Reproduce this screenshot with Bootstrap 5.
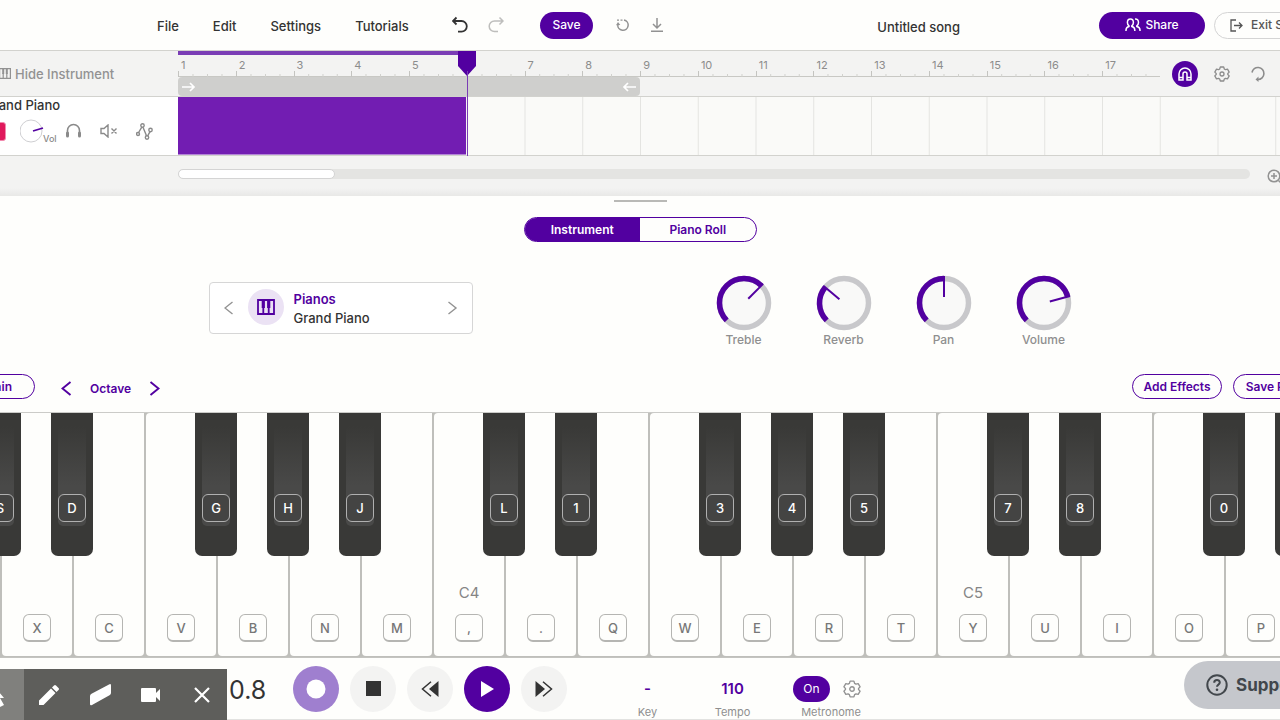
<!DOCTYPE html>
<html lang="en">
<head>
<meta charset="utf-8">
<meta name="viewport" content="width=device-width, initial-scale=1">
<title>Untitled song</title>
<link rel="stylesheet" href="https://cdn.jsdelivr.net/npm/bootstrap@5.3.0/dist/css/bootstrap.min.css">
<style>
:root{--violet:#5200a0;--ink:#333;--soft:#929292;--line:#d2d2ce;--side:178px;--tools:120px;--bar:calc((100% - var(--tools)) / 17)}
body{font-family:Inter,"Liberation Sans",sans-serif;font-size:13px;line-height:18px;color:var(--ink);background:#fefefc;font-weight:500;min-height:100vh;overflow:hidden}
button{font:inherit;color:inherit;background:none;border:0;padding:0}
a{color:inherit;text-decoration:none}
svg{display:block;flex:none;fill:none;stroke:currentColor}
.violet{color:var(--violet)}
.soft{color:var(--soft)}
.topbar{height:51px;border-bottom:1px solid var(--line)}
.menu{width:295px;margin-left:157px;gap:34px;padding-top:2px}
.tools{gap:20px}
.pill{height:27px;border-radius:14px;font-size:12px}
.pill-fill{background:var(--violet);color:#fff}
.save{width:53px;margin:0 3px 0 16px}
.share{width:106px}
.song-title{margin-right:139px;padding-top:3px}
.exit{width:112px;border:1px solid #d4d4d4;padding-left:15px;color:#555}
.bleed{margin-right:-46px;gap:9px}
.arranger{background:#f3f3f2}
.side{width:var(--side);overflow:hidden}
.ruler-row{height:46px;border-bottom:1px solid var(--line)}
.ruler{margin-right:var(--tools);height:26px;border-bottom:1px solid #c8c8c4}
.measure{flex:1 1 0;height:26px;padding:5px 0 0 3px;font-size:11px;font-weight:400;color:#8c8c8c;position:relative;
background:linear-gradient(90deg,#c4c4c0 1px,transparent 1px) 0 100%/100% 6px no-repeat,linear-gradient(90deg,#d0d0cc 1px,transparent 1px) 0 100%/25% 3px repeat-x}
.played{top:0;left:0;height:4px;width:calc(var(--bar) * 5);background:#7a3db5}
.loop{height:19px;width:calc(var(--bar) * 8);background:#cfcfcd;border-radius:4px;color:#fff;padding:0 3px}
.playhead{top:0;left:calc(var(--bar) * 5 - 9px);width:20px;color:var(--violet);z-index:2}
.ruler-tools{right:0;top:10px;width:108px;gap:12px;color:#8c8c8c}
.magnet{width:26px;height:26px;border-radius:50%;background:var(--violet);color:#fff}
.lane-row{height:59px;border-bottom:1px solid var(--line);background:#fff}
.lane{background:linear-gradient(90deg,#e4e4e1 1px,transparent 1px) 0 0/var(--bar) 100% #fafaf8}
.clip{width:calc(var(--bar) * 5 - 1px);background:#721db2;border-bottom:1px solid #b384d6}
.track-name{margin:-1px 0 0 -16px}
.track-tools{margin:3px 0 0 -14px;height:28px;color:#8a8a8a}
.rec{width:20px;height:19px;border-radius:3px;background:#e0195c;border:1px solid #f28aae;margin-right:14px}
.vol{font-size:9px;line-height:10px;margin:16px 0 0 -1px}
.mute{margin:0 18px}
.scroll-row{height:40px;padding:13px 0 0 178px;background:linear-gradient(#f3f3f2 80%,#e8e8e6)}
.scroll-track{height:10px;border-radius:5px;background:#e4e4e2;flex:0 0 calc(100% - 30px)}
.scroll-thumb{height:10px;width:157px;border-radius:5px;background:#fff;border:1px solid #d4d4d4}
.zoom-btn{margin-left:17px}
.grip{width:53px;height:2px;margin:4px auto 15px;background:#b9b9b6}
.tabs-pill{width:233px;height:25px;border:1px solid var(--violet);border-radius:13px;overflow:hidden}
.tabs-pill button{font-size:12px;font-weight:600;color:var(--violet)}
.tabs-pill .on{background:var(--violet);color:#fff}
.devices{margin-top:33px;gap:243px}
.picker{width:264px;height:52px;border:1px solid #d6d6d6;border-radius:4px;padding:0 14px;margin-top:7px;background:#fff}
.family{width:36px;height:36px;border-radius:50%;background:#ebe2f4;margin:-2px 6px 0 14px}
.picker-text{line-height:19px;padding-top:2px}
.knobs{gap:44px}
.knob{width:56px;color:#8f8f8f;font-size:12px}
.knob svg{overflow:visible}
.controls{margin-top:25px;padding-bottom:13px}
.outline{height:25px;border:1px solid var(--violet);border-radius:13px;font-size:12px;color:var(--violet);font-weight:600}
.sustain{width:70px;margin-left:-35px;padding-right:22px}
.octave{margin-left:26px;gap:18px;font-size:12px;font-weight:600}
.fx{width:90px}
.preset{width:94px;margin-right:-47px;margin-left:11px}
.keyboard{margin-left:-70px;height:246px;background:#bfbfbb;border-top:1px solid #cbcbc8;border-bottom:1px solid #c4c4c0}
.slot{flex:0 0 72px;position:relative}
.ivory{width:70px;height:243px;background:#fefefc;border-radius:0 0 4px 4px;color:#777;padding-bottom:14px}
.slot.c .ivory,.slot.f .ivory{border-radius:4px}
.ebony{top:0;left:49px;width:42px;height:143px;background:#393937;border-radius:0 0 7px 7px;color:#fff;z-index:1}
.dip{width:28px;height:100px;margin:13px auto 0;padding-top:68px;border-radius:0 0 5px 5px;background:linear-gradient(#393937,#494948 60%,#494948)}
.cap{width:28px;height:28px;line-height:27px;border:1px solid #b5b5b2;border-radius:6px}
.ivory .cap{border-bottom-width:2px}
.ebony .cap{border-color:#b0b0b0;background:#444443}
.note{font-size:15px;font-weight:400;margin-bottom:12px;color:#858585}
.transport{height:62px;padding-left:229px;border-bottom:1px solid #e2e2e0}
.clock{width:64px;font-size:25px;font-weight:400;line-height:30px;padding-top:2px}
.round{width:46px;height:46px;border-radius:50%;background:#f3f3f2}
.round.rec-on{background:#9f7fcf;color:#fff}
.round.go{background:var(--violet);color:#fff}
.stats{margin-left:38px}
.stat{width:85px;font-size:11px;line-height:14px;font-weight:400;color:#8f8f8f}
.stat b,.metro-row{height:26px;line-height:26px;margin-bottom:3px}
.stat b{font-size:15px;font-weight:600;color:var(--violet)}
.metro{width:76px;margin-left:18px}
.on-pill{width:37px;height:26px;border-radius:13px;font-size:12px}
.capture{left:0;bottom:0;width:227px;height:51px;background:#5e5e5b;color:#fff;z-index:3;overflow:hidden}
.capture button{flex:1 1 0;height:51px}
.capture .first{flex:0 0 24px;background:#80807d}
.support{right:-32px;bottom:11px;width:128px;height:48px;border-radius:24px;background:#c5c7cc;color:#42474c;padding-left:22px;font-size:17px;font-weight:700;gap:8px;z-index:3}
</style>
</head>
<body class="d-flex flex-column">

<header class="topbar d-flex align-items-center">
  <nav class="menu d-flex flex-shrink-0">
    <a href="#">File</a><a href="#">Edit</a><a href="#">Settings</a><a href="#">Tutorials</a>
  </nav>
  <div class="tools d-flex align-items-center flex-shrink-0 me-auto">
    <button aria-label="Undo"><svg width="16" height="18" viewBox="0 0 16 18" stroke-width="1.800"><path d="M4.500 1.500 1 5l3.500 3.500M1 5h8.500a5.300 5.300 0 0 1 0 10.600H6"/></svg></button>
    <button aria-label="Redo" class="text-black-50 opacity-50"><svg width="16" height="18" viewBox="0 0 16 18" stroke-width="1.500"><path d="M11.500 1.500 15 5l-3.500 3.500M15 5H6.500a5.300 5.300 0 0 0 0 10.600H10"/></svg></button>
    <button class="pill pill-fill save">Save</button>
    <button aria-label="Revert" class="soft"><svg width="14" height="16" viewBox="0 0 14 16" stroke-width="1.500"><path d="M8 3a5.200 5.200 0 1 1-6.200 4.500"/><path d="M1 3.200h2M4.500 3.200h2" stroke-width="1.200"/><path d="M0 8.200 2 5l2.300 3z" fill="currentColor" stroke="none"/></svg></button>
    <button aria-label="Download" class="soft"><svg width="14" height="16" viewBox="0 0 14 16" stroke-width="1.500"><path d="M7 1v10M3 7l4 4 4-4M1 14.300h12"/></svg></button>
  </div>
  <div class="song-title">Untitled song</div>
  <div class="bleed d-flex flex-shrink-0">
    <button class="pill pill-fill share d-flex align-items-center justify-content-center gap-1"><svg width="16" height="14" viewBox="0 0 16 14" stroke-width="1.500"><path d="M1 13v-1c0-2 1-3 3-3.500V7.800C2.800 7 2.400 6 2.400 4.600 2.400 2.400 3.600 1 5.400 1s3 1.400 3 3.600c0 1.400-.5 2.400-1.600 3.200v.7c2 .5 3 1.500 3 3.500v1M10 1c2.300-.2 3.500 1.300 3.500 3.600 0 1.400-.5 2.400-1.700 3.200v.7c2 .5 3.200 1.500 3.200 3.500v1"/></svg>Share</button>
    <button class="pill exit d-flex align-items-center gap-2 text-nowrap"><svg width="13" height="13" viewBox="0 0 13 13" stroke-width="1.300"><path d="M6 1H1v11h5M4 6.500h8M9 3.500l3 3-3 3"/></svg>Exit Studio</button>
  </div>
</header>

<section class="arranger">
  <div class="ruler-row d-flex">
    <div class="side soft d-flex align-items-center">
      <button class="d-flex align-items-center text-nowrap"><svg class="me-1" width="11" height="11" viewBox="1 0 11 11" stroke-width="1.200"><path d="M.6.6h10.800v9.800H.6zM4.200 5v5.400M7.800 5v5.400"/><path d="M4.200.6V6M7.800.6V6" stroke-width="2"/></svg>Hide Instrument</button>
    </div>
    <div class="flex-grow-1 position-relative">
      <div class="ruler d-flex" id="ruler"></div>
      <div class="loop d-flex align-items-center justify-content-between">
        <svg width="16" height="12" viewBox="0 0 16 12" stroke-width="1.700"><path d="M1 6h12M9 2l4 4-4 4"/></svg>
        <svg width="16" height="12" viewBox="0 0 16 12" stroke-width="1.700"><path d="M15 6H3M7 2 3 6l4 4"/></svg>
      </div>
      <div class="played position-absolute"></div>
      <div class="playhead position-absolute"><svg width="20" height="105" viewBox="0 0 20 105"><path d="M0 0h18v15l-9 10-9-10z" fill="currentColor" stroke="none"/><path d="M9.500 20v85" stroke="#7a3db5"/></svg></div>
      <div class="ruler-tools position-absolute d-flex align-items-center">
        <button class="magnet d-grid align-items-center justify-content-center" aria-label="Snap"><svg width="14" height="14" viewBox="0 0 14 14" stroke-width="1.500"><path d="M1 13V7a6 6 0 0 1 12 0v6H9V7a2 2 0 0 0-4 0v6zM1 10.500h4M9 10.500h4"/></svg></button>
        <button aria-label="Settings" class="ms-1 me-2"><svg width="16" height="16" viewBox="0 0 16 16" stroke-width="1.300"><path d="M6.300 1h3.400l.6 2 1.200.7 2-.5 1.700 2.900L13.800 7.500v1l1.400 1.400-1.700 2.900-2-.5-1.200.7-.6 2H6.300l-.6-2-1.200-.7-2 .5L.8 9.900l1.400-1.400v-1L.8 6.100l1.700-2.900 2 .5L5.700 3z" stroke-linejoin="round"/><circle cx="8" cy="8" r="2"/></svg></button>
        <button aria-label="Loop"><svg width="16" height="16" viewBox="0 0 16 16" stroke-width="1.600"><path d="M2 6.500A6 6 0 1 1 8 13.500"/><path d="m8.500 10.500-3 3 3 2.500z" fill="currentColor" stroke="none"/></svg></button>
      </div>
    </div>
  </div>

  <div class="lane-row d-flex">
    <div class="side">
      <div class="track-name text-nowrap">Grand Piano</div>
      <div class="track-tools d-flex align-items-center">
        <button class="rec flex-shrink-0" aria-label="Arm"></button>
        <svg width="24" height="24" viewBox="-1 0 24 24"><circle cx="10" cy="12" r="11" stroke="#cfcfd2"/><path d="m12 12 10-3" stroke="#5200a0" stroke-width="1.800"/></svg>
        <span class="vol">Vol</span>
        <button aria-label="Solo" class="ms-2"><svg width="17" height="16" viewBox="0 0 17 16" stroke-width="1.600"><path d="M2.500 11V7.500a6 6 0 0 1 12 0V11"/><path d="M2.500 10v3M14.500 10v3" stroke-width="3" stroke-linecap="round"/></svg></button>
        <button aria-label="Mute" class="mute"><svg width="18" height="14" viewBox="0 0 18 14" stroke-width="1.400"><path d="M1 4.500h3L8 1v12L4 9.500H1zM11.500 4.500l5 5M16.500 4.500l-5 5"/></svg></button>
        <button aria-label="Automation"><svg width="17" height="17" viewBox="0 0 17 17" stroke-width="1.400"><circle cx="2" cy="11" r="1.500"/><circle cx="6.500" cy="2.500" r="1.700"/><circle cx="11" cy="14.500" r="1.700"/><circle cx="14.500" cy="7" r="1.700"/><path d="M2.600 9.500 5.800 4.200M7 4.200l3.500 8.600M11.700 12.800 14 8.700"/></svg></button>
      </div>
    </div>
    <div class="lane flex-grow-1 d-flex"><div class="clip"></div></div>
  </div>

  <div class="scroll-row d-flex">
    <div class="scroll-track"><div class="scroll-thumb"></div></div>
    <button class="zoom-btn soft align-self-start" aria-label="Zoom in"><svg width="17" height="17" viewBox="0 0 17 17" stroke-width="1.500"><circle cx="7" cy="7" r="5.800"/><path d="M4 7h6M7 4v6M11.500 11.500l5 5"/></svg></button>
  </div>
</section>

<main>
  <div class="grip"></div>
  <div class="tabs-pill d-flex mx-auto">
    <button class="on w-50">Instrument</button><button class="w-50">Piano Roll</button>
  </div>

  <div class="devices d-flex justify-content-center">
    <div class="picker d-flex align-items-center flex-shrink-0">
      <button class="soft" aria-label="Previous instrument"><svg width="10" height="14" viewBox="1 0 10 14" stroke-width="1.400"><path d="M9.500 1 2 7l7.500 6"/></svg></button>
      <div class="family violet d-flex align-items-center justify-content-center"><svg width="18" height="16" viewBox="0 0 18 16" stroke-width="1.800"><path d="M1 1h16v14H1zM6.300 8v7M11.700 8v7"/><path d="M6.300 1v8M11.700 1v8" stroke-width="3.200"/></svg></div>
      <div class="picker-text flex-grow-1 ps-1">
        <div class="violet fw-semibold">Pianos</div>
        <div>Grand Piano</div>
      </div>
      <button class="soft" aria-label="Next instrument"><svg width="11" height="14" viewBox="0 0 11 14" stroke-width="1.400"><path d="m1.500 1 7.500 6-7.500 6"/></svg></button>
    </div>
    <div class="knobs d-flex" id="knobs"></div>
  </div>

  <div class="controls d-flex align-items-center">
    <button class="outline sustain text-end flex-shrink-0">Sustain</button>
    <div class="octave violet d-flex align-items-center pt-1">
      <button aria-label="Octave down"><svg width="11" height="15" viewBox="0 0 11 15" stroke-width="1.900"><path d="M9.500 1 1.500 7.500l8 6.500"/></svg></button>
      Octave
      <button aria-label="Octave up"><svg width="11" height="15" viewBox="0 0 11 15" stroke-width="1.900"><path d="m1.500 1 8 6.500-8 6.500"/></svg></button>
    </div>
    <button class="outline fx ms-auto flex-shrink-0">Add Effects</button>
    <button class="outline preset flex-shrink-0">Save Preset</button>
  </div>

  <div class="keyboard d-flex" id="keyboard"></div>
</main>

<footer class="transport d-flex align-items-center">
  <div class="clock">0.8</div>
  <div class="d-flex" style="gap:11px">
    <button class="round rec-on d-flex align-items-center justify-content-center" aria-label="Record"><svg width="20" height="20"><circle cx="10" cy="10" r="9.500" fill="currentColor" stroke="none"/></svg></button>
    <button class="round d-flex align-items-center justify-content-center" aria-label="Stop"><svg width="15" height="15"><path d="M0 0h15v15H0z" fill="currentColor" stroke="none"/></svg></button>
    <button class="round d-flex align-items-center justify-content-center" aria-label="Rewind"><svg width="18" height="16" viewBox="0 0 18 16" stroke-width="1.500"><path d="M17.500 0v16L8 8z" fill="currentColor" stroke="none"/><path d="M10 .8 1.500 8l8.500 7.200"/></svg></button>
    <button class="round go d-flex align-items-center justify-content-center" aria-label="Play"><svg width="13" height="16" viewBox="0 0 13 16"><path d="M0 0v16l13-8z" fill="currentColor" stroke="none"/></svg></button>
    <button class="round d-flex align-items-center justify-content-center" aria-label="Forward"><svg width="18" height="16" viewBox="0 0 18 16" stroke-width="1.500"><path d="M.5 0v16L10 8z" fill="currentColor" stroke="none"/><path d="M8 .8 16.500 8 8 15.200"/></svg></button>
  </div>
  <div class="stats d-flex text-center align-self-end">
    <div class="stat"><b class="d-block">-</b>Key</div>
    <div class="stat"><b class="d-block">110</b>Tempo</div>
    <div class="stat metro">
      <div class="metro-row d-flex align-items-center justify-content-between pe-2">
        <button class="pill-fill on-pill">On</button>
        <button class="soft" aria-label="Metronome settings"><svg width="18" height="18" viewBox="0 0 16 16" stroke-width="1.200"><path d="M6.300 1h3.400l.6 2 1.200.7 2-.5 1.700 2.900L13.800 7.500v1l1.400 1.400-1.700 2.900-2-.5-1.200.7-.6 2H6.300l-.6-2-1.200-.7-2 .5L.8 9.900l1.400-1.400v-1L.8 6.100l1.700-2.900 2 .5L5.700 3z" stroke-linejoin="round"/><circle cx="8" cy="8" r="2"/></svg></button>
      </div>
      Metronome
    </div>
  </div>
</footer>

<div class="capture position-fixed d-flex">
  <button class="first" aria-label="Cursor"><svg width="24" height="51"><path d="m-8 15 12 14h-4l4 7-4 2-4-7-4 3z" fill="currentColor" stroke="none"/></svg></button>
  <button class="d-flex align-items-center justify-content-center" aria-label="Pen"><svg width="20" height="20" viewBox="0 0 20 20"><path d="m0 15.500 12-12 4.500 4.500-12 12H0zM13 2.500 15 .5q1-1 2 0l2.500 2.500q1 1 0 2l-2 2z" fill="currentColor" stroke="none"/></svg></button>
  <button class="d-flex align-items-center justify-content-center" aria-label="Eraser"><svg width="21" height="22" viewBox="0 0 21 22"><path d="M0 12q0-1.500 1.500-2.300L19 .4q2-.9 2 1V9q0 1.500-1.500 2.300L2 21q-2 .9-2-1z" fill="currentColor" stroke="none"/></svg></button>
  <button class="d-flex align-items-center justify-content-center" aria-label="Camera"><svg width="19" height="14" viewBox="0 0 19 14"><path d="M1 0h13q1 0 1 1v4l4-4v12l-4-4v4q0 1-1 1H1q-1 0-1-1V1q0-1 1-1z" fill="currentColor" stroke="none"/></svg></button>
  <button class="d-flex align-items-center justify-content-center" aria-label="Close"><svg width="16" height="16" stroke-width="2.200"><path d="m1 1 14 14M15 1 1 15"/></svg></button>
</div>
<button class="support position-fixed d-flex align-items-center"><svg width="22" height="22" viewBox="0 0 22 22" stroke-width="2"><circle cx="11" cy="11" r="9.700"/><path d="M8.200 8.700c0-3.700 5.600-3.500 5.600-.2 0 2.200-2.800 2-2.800 4.200"/><circle cx="11" cy="15.700" r="1.300" fill="currentColor" stroke="none"/></svg>Support</button>

<script src="https://cdn.jsdelivr.net/npm/bootstrap@5.3.0/dist/js/bootstrap.bundle.min.js"></script>
<script>
// measure numbers; the one under the playhead marker stays blank
document.getElementById('ruler').innerHTML = Array.from({length: 17}, (_, i) =>
  `<div class="measure">${i === 5 ? '' : i + 1}</div>`).join('');

// dial angle in degrees, 0 = straight up, sweep starts at -135
document.getElementById('knobs').innerHTML = [['Treble', 45], ['Reverb', -50], ['Pan', 0], ['Volume', 75]].map(([name, a]) =>
  `<label class="knob d-flex flex-column align-items-center position-relative">
    <svg width="56" height="56" viewBox="0 0 56 56"><circle cx="28" cy="28" r="24.500" fill="#f9f9f8" stroke="#c8c8cb" stroke-width="5.500"/>
    <circle cx="28" cy="28" r="24.500" stroke="#5200a0" stroke-width="5.500" pathLength="360" stroke-dasharray="${a + 135} 360" transform="rotate(135 28 28)"/>
    <path d="M28 22V1" stroke="#5200a0" stroke-width="2" transform="rotate(${a} 28 28)"/></svg>
    <input class="position-absolute opacity-0 w-100 h-75" type="range" min="-135" max="135" value="${a}">${name}</label>`).join('');

// white key, black key to its right, octave label
const keys = [['Z','S'],['X','D'],['C'],['V','G','','f'],['B','H'],['N','J'],['M'],[',','L','C4','c'],['.','1'],['Q'],
  ['W','3','','f'],['E','4'],['R','5'],['T'],['Y','7','C5','c'],['U','8'],['I'],['O','0','','f'],['P','-']];
document.getElementById('keyboard').innerHTML = keys.map(([w, b, note, cls]) =>
  `<div class="slot ${cls || ''}"><button class="ivory d-flex flex-column align-items-center justify-content-end">
    ${note ? `<span class="note">${note}</span>` : ''}<span class="cap">${w}</span></button>
    ${b ? `<button class="ebony position-absolute d-flex"><span class="dip d-block"><span class="cap d-block">${b}</span></span></button>` : ''}</div>`).join('');
</script>
</body>
</html>
